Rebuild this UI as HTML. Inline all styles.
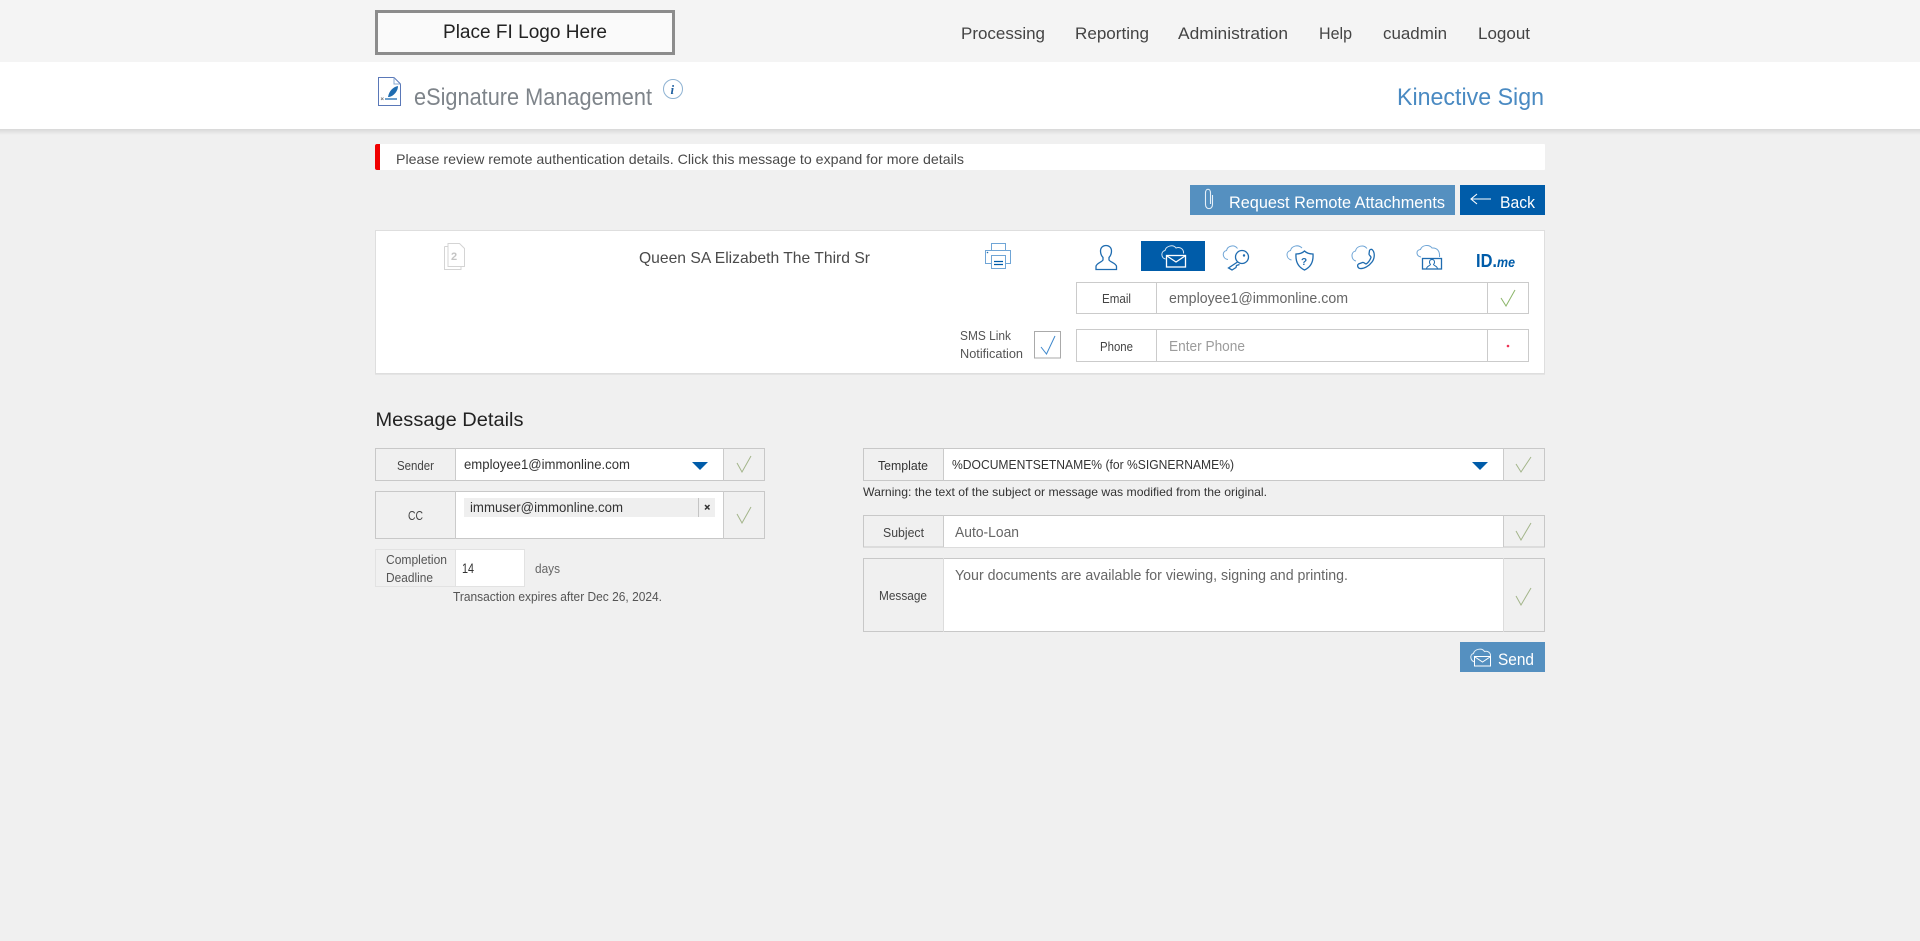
<!DOCTYPE html>
<html lang="en">
<head>
<meta charset="utf-8">
<title>eSignature Management</title>
<style>
html,body{margin:0;padding:0;width:1920px;height:941px;overflow:hidden;background:#f0f0f0}
svg{display:block;position:absolute;left:0;top:0}
text{font-family:"Liberation Sans",sans-serif;white-space:pre}
.i{fill:none;stroke:#1f6cb0;stroke-width:1.3}
.c{fill:none;stroke:#6fa5d6;stroke-width:1}
.l{fill:none;stroke:#cbcbcb;stroke-width:1}
.n{font-size:16.5px;fill:#444}
.lb{font-size:12.5px;fill:#444}
.v{font-size:14.5px;fill:#666}
.ck{fill:none;stroke:#a3b58a;stroke-width:1}
</style>
</head>
<body>
<svg width="1920" height="941" viewBox="0 0 1920 941" xmlns="http://www.w3.org/2000/svg">
<defs>
<linearGradient id="sh" x1="0" y1="0" x2="0" y2="1"><stop offset="0" stop-color="#d8d8d8"/><stop offset="1" stop-color="#f0f0f0"/></linearGradient>
</defs>
<rect width="1920" height="941" fill="#f0f0f0"/>

<!-- top bar -->
<rect width="1920" height="62" fill="#f4f4f4"/>
<rect x="376.500" y="11.500" width="297" height="42" fill="#fafafa" stroke="#8c8c8c" stroke-width="3"/>
<text x="443" y="38" font-size="19" fill="#222" textLength="164" lengthAdjust="spacingAndGlyphs">Place FI Logo Here</text>
<text class="n" x="961" y="39" textLength="84" lengthAdjust="spacingAndGlyphs">Processing</text>
<text class="n" x="1075" y="39" textLength="74" lengthAdjust="spacingAndGlyphs">Reporting</text>
<text class="n" x="1178" y="39" textLength="110" lengthAdjust="spacingAndGlyphs">Administration</text>
<text class="n" x="1319" y="39" textLength="33" lengthAdjust="spacingAndGlyphs">Help</text>
<text class="n" x="1383" y="39" textLength="64" lengthAdjust="spacingAndGlyphs">cuadmin</text>
<text class="n" x="1478" y="39" textLength="52" lengthAdjust="spacingAndGlyphs">Logout</text>

<!-- title band -->
<rect y="129" width="1920" height="6" fill="url(#sh)"/>
<rect y="62" width="1920" height="67" fill="#fff"/>
<path d="M378.500 77.500H394L400.500 84V105.500H378.500Z" fill="none" stroke="#5a78b8" stroke-width="1"/>
<path d="M394 77.500V84H400.500" fill="none" stroke="#8aa8d0" stroke-width="1"/>
<path d="M388 97C389 91 393 87 398 86C398 91 394 96 389 97Z" fill="#1f6cb0"/>
<path d="M385 99H397" stroke="#1f6cb0" stroke-width="1.300"/>
<path d="M381 97.500L383.500 100M383.500 97.500L381 100" stroke="#777" stroke-width=".8"/>
<text x="414" y="105" font-size="24" fill="#7e848a" textLength="238" lengthAdjust="spacingAndGlyphs">eSignature Management</text>
<circle cx="673" cy="89" r="9.500" fill="none" stroke="#8eb2d2" stroke-width="1"/>
<text x="670.500" y="94" font-size="13" font-weight="bold" font-style="italic" fill="#1f5f9f" style="font-family:'Liberation Serif',serif">i</text>
<text x="1397" y="105" font-size="24" fill="#4a8ac2" textLength="147" lengthAdjust="spacingAndGlyphs">Kinective Sign</text>

<!-- alert -->
<rect x="375" y="144" width="1170" height="26" rx="1" fill="#fff"/>
<path d="M377 144H380V170H377Q375 170 375 168V146Q375 144 377 144Z" fill="#f00000"/>
<text x="396" y="164" font-size="14" fill="#4a4a4a" textLength="568" lengthAdjust="spacingAndGlyphs">Please review remote authentication details. Click this message to expand for more details</text>

<!-- action buttons -->
<rect x="1190" y="185" width="265" height="30" fill="#5590c0"/>
<path d="M1212.500 195V204.500C1212.500 210 1205.500 210 1205.500 204.500V193C1205.500 188 1210.500 188 1210.500 193V204" fill="none" stroke="#e6f0f8" stroke-width="1.100"/>
<text x="1229" y="208" font-size="17" fill="#fff" textLength="216" lengthAdjust="spacingAndGlyphs">Request Remote Attachments</text>
<rect x="1460" y="185" width="85" height="30" fill="#005ca9"/>
<path d="M1491 199H1471M1477 194L1471 199L1477 204" fill="none" stroke="#fff" stroke-width="1.100"/>
<text x="1500" y="208" font-size="17" fill="#fff" textLength="35" lengthAdjust="spacingAndGlyphs">Back</text>

<!-- signer card -->
<rect x="375.500" y="230.500" width="1169" height="143" fill="#fff" stroke="#dedede"/>
<path d="M375 374.500H1545" stroke="#e4e4e4"/>
<path d="M444.500 246.500H448M448 243.500H459.500L464.500 248.500V266.500H448Z" fill="#fff" stroke="#d4d4d4"/>
<path d="M444.500 246.500V269.500H461V266.500" fill="none" stroke="#d4d4d4"/>
<text x="451" y="260" font-size="11" font-weight="bold" fill="#c4c4c4">2</text>
<text x="639" y="263" font-size="16" fill="#4a4a4a" textLength="231" lengthAdjust="spacingAndGlyphs">Queen SA Elizabeth The Third Sr</text>

<path d="M991.500 250.500V243.500H1005.500V250.500" fill="none" stroke="#6fa5d6"/>
<path d="M991 263.500H985.500V250.500H1010.500V263.500H1005" fill="none" stroke="#6fa5d6"/>
<rect x="991.500" y="255.500" width="14" height="13" fill="#fff" stroke="#6fa5d6"/>
<path d="M994 261.500H1003M994 264.500H1003" stroke="#005ca9" stroke-width="1.200"/>
<circle cx="987.500" cy="252.500" r=".8" fill="#1f6cb0"/>

<!-- auth tabs -->
<path class="i" d="M1096 269.500H1116.500V266.500C1116.500 263.500 1110 262 1109 260V257.500C1111 255.500 1111.500 253 1111.500 251C1111.500 247.500 1109 245.500 1106 245.500C1103 245.500 1100.500 247.500 1100.500 251C1100.500 253 1101 255.500 1103 257.500V260C1102 262 1096 263.500 1096 266.500Z"/>

<rect x="1141" y="241" width="64" height="30" fill="#005ca9"/>
<path d="M1165.500 259C1161 258 1160.500 251.500 1165 250.500C1166 246 1173 244 1176 248C1180 246.500 1184 249 1183.500 253.500" fill="none" stroke="#d8e6f2" stroke-width="1"/>
<rect x="1166.500" y="255.500" width="19" height="11.500" fill="#005ca9" stroke="#fff" stroke-width="1.300"/>
<path d="M1167 256L1176 262L1185 256" fill="none" stroke="#fff" stroke-width="1.300"/>

<path class="c" d="M1228 259.500C1222.500 259 1221.500 251.500 1226.500 250.500C1227.500 246 1234 244 1237.500 248.500"/>
<circle class="i" cx="1242" cy="257" r="6.500"/>
<circle cx="1244" cy="255.500" r="1.200" fill="#1f6cb0"/>
<path class="i" d="M1237.500 262L1228.500 268L1232 270L1236 267.500L1236.500 265.500L1239.500 264.500"/>

<path class="c" d="M1291.500 260C1286 259 1285.500 251.500 1290.500 250.500C1291.500 246 1298 244 1302 248"/>
<path class="i" d="M1304.500 251C1307 253.500 1310 254 1313 254C1313.500 261 1311 267 1304.500 270C1298 267 1295.500 261 1296 254C1299 254 1302 253.500 1304.500 251Z"/>
<text x="1301" y="265" font-size="10" font-weight="bold" fill="#1f6cb0">?</text>

<path class="c" d="M1356 261C1351 260 1350.500 252 1355.500 251C1356.500 246 1363.500 244 1367 248.500"/>
<path class="i" d="M1372 249.500C1375 252 1375 258 1372 262C1369 266 1364 269 1360 268.500C1357.500 268 1357 265 1358.500 264L1362.500 262.500C1364 262 1365 264 1366 264C1368 263 1370 260 1371 257.500C1371 256 1369 255.500 1369 254L1369.500 250.500C1370 249.500 1371 249 1372 249.500Z"/>

<path class="c" d="M1421 257C1416 256 1415.500 250 1420.500 249.500C1422 245 1429 244 1432 248C1437 247.500 1440 251 1439.500 257"/>
<rect x="1422.500" y="258.500" width="19" height="10.500" fill="#fff" stroke="#1f6cb0" stroke-width="1.300"/>
<path d="M1426.500 269C1426.500 266 1430 266 1430.500 264.500C1429 263 1429 259.500 1432 259.500C1435 259.500 1435 263 1433.500 264.500C1434 266 1437.500 266 1437.500 269" fill="none" stroke="#1f6cb0" stroke-width="1"/>

<text x="1476" y="267" font-size="18" font-weight="bold" fill="#005ca9" textLength="21" lengthAdjust="spacingAndGlyphs">ID.</text>
<text x="1497" y="267" font-size="14" font-weight="bold" font-style="italic" fill="#005ca9" textLength="18" lengthAdjust="spacingAndGlyphs">me</text>

<!-- email + phone -->
<rect class="l" x="1076.500" y="282.500" width="452" height="31"/>
<path class="l" d="M1156.500 282V314M1487.500 282V314"/>
<text class="lb" x="1102" y="303" textLength="29" lengthAdjust="spacingAndGlyphs">Email</text>
<text class="v" x="1169" y="303" textLength="179" lengthAdjust="spacingAndGlyphs">employee1@immonline.com</text>
<path d="M1501 298L1506 306L1515 290" fill="none" stroke="#8cb66a" stroke-width="1"/>
<rect class="l" x="1076.500" y="329.500" width="452" height="32"/>
<path class="l" d="M1156.500 329V362M1487.500 329V362"/>
<text class="lb" x="1100" y="351" textLength="33" lengthAdjust="spacingAndGlyphs">Phone</text>
<text class="v" x="1169" y="351" textLength="76" lengthAdjust="spacingAndGlyphs" style="fill:#9c9c9c">Enter Phone</text>
<circle cx="1508" cy="346" r="1.300" fill="#ee3355"/>

<text class="lb" x="960" y="340" textLength="51" lengthAdjust="spacingAndGlyphs" style="fill:#555">SMS Link</text>
<text class="lb" x="960" y="358" textLength="63" lengthAdjust="spacingAndGlyphs" style="fill:#555">Notification</text>
<rect x="1034.500" y="331.500" width="26" height="26.500" fill="#fff" stroke="#aaa"/>
<path d="M1041 347L1046.500 354L1055 336" fill="none" stroke="#3f88cc" stroke-width="1"/>

<!-- Message Details -->
<text x="375.500" y="426" font-size="19" fill="#222" textLength="148" lengthAdjust="spacingAndGlyphs">Message Details</text>

<rect x="375.500" y="448.500" width="389" height="32" fill="#f0f0f0" stroke="#c8c8c8"/>
<rect x="455" y="449" width="268" height="31" fill="#fff"/>
<path class="l" d="M455.500 448V481M723.500 448V481"/>
<text class="lb" x="397" y="470" textLength="37" lengthAdjust="spacingAndGlyphs">Sender</text>
<text x="464" y="469" font-size="14" fill="#333" textLength="166" lengthAdjust="spacingAndGlyphs">employee1@immonline.com</text>
<path d="M692 462H708L700 470Z" fill="#005ca9"/>
<path class="ck" d="M737 463L742 472L751 456"/>

<rect x="375.500" y="491.500" width="389" height="47" fill="#f0f0f0" stroke="#c8c8c8"/>
<rect x="455" y="492" width="268" height="46" fill="#fff"/>
<path class="l" d="M455.500 491V539M723.500 491V539"/>
<text class="lb" x="408" y="520" textLength="15" lengthAdjust="spacingAndGlyphs">CC</text>
<rect x="464" y="498" width="251" height="19" fill="#efefef"/>
<path d="M698.500 498V517" stroke="#c4c4c4"/>
<text x="470" y="512" font-size="14" fill="#333" textLength="153" lengthAdjust="spacingAndGlyphs">immuser@immonline.com</text>
<path d="M705 505L709.500 509.500M709.500 505L705 509.500" stroke="#333" stroke-width="1.500"/>
<path class="ck" d="M737 514L742 523L751 507"/>

<rect x="375.500" y="549.500" width="149" height="37" fill="#f0f0f0" stroke="#e2e2e2"/>
<rect x="455" y="550" width="69" height="36" fill="#fff"/>
<path d="M455.500 549V587" stroke="#e2e2e2"/>
<text class="lb" x="386" y="564" textLength="61" lengthAdjust="spacingAndGlyphs" style="fill:#555">Completion</text>
<text class="lb" x="386" y="582" textLength="47" lengthAdjust="spacingAndGlyphs" style="fill:#555">Deadline</text>
<text x="462" y="573" font-size="14" fill="#333" textLength="12" lengthAdjust="spacingAndGlyphs">14</text>
<text x="535" y="573" font-size="13" fill="#666" textLength="25" lengthAdjust="spacingAndGlyphs">days</text>
<text x="453" y="601" font-size="12.500" fill="#555" textLength="209" lengthAdjust="spacingAndGlyphs">Transaction expires after Dec 26, 2024.</text>

<!-- right column -->
<rect x="863.500" y="448.500" width="681" height="32" fill="#f0f0f0" stroke="#c8c8c8"/>
<rect x="943" y="449" width="560" height="31" fill="#fff"/>
<path class="l" d="M943.500 448V481M1503.500 448V481"/>
<text class="lb" x="878" y="470" textLength="50" lengthAdjust="spacingAndGlyphs" style="fill:#333">Template</text>
<text x="952" y="469" font-size="13" fill="#333" textLength="282" lengthAdjust="spacingAndGlyphs">%DOCUMENTSETNAME% (for %SIGNERNAME%)</text>
<path d="M1472 462H1488L1480 470Z" fill="#005ca9"/>
<path class="ck" d="M1516 464L1521 472L1531 457"/>
<text x="863" y="496" font-size="12" fill="#333" textLength="404" lengthAdjust="spacingAndGlyphs">Warning: the text of the subject or message was modified from the original.</text>

<rect x="863.500" y="515.500" width="681" height="31.500" fill="#f0f0f0" stroke="#c8c8c8"/>
<rect x="944" y="516" width="559" height="31" fill="#fff"/>
<path class="l" d="M943.500 515V547M1503.500 515V547"/>
<text class="lb" x="883" y="537" textLength="41" lengthAdjust="spacingAndGlyphs">Subject</text>
<text class="v" x="955" y="537" textLength="64" lengthAdjust="spacingAndGlyphs">Auto-Loan</text>
<path class="ck" d="M1516 531L1521 540L1531 523"/>

<rect x="863.500" y="558.500" width="681" height="73" fill="#f0f0f0" stroke="#c8c8c8"/>
<rect x="944" y="559" width="559" height="72" fill="#fff"/>
<path class="l" d="M943.500 558V632M1503.500 558V632" style="stroke:#dcdcdc"/>
<text class="lb" x="879" y="600" textLength="48" lengthAdjust="spacingAndGlyphs">Message</text>
<text class="v" x="955" y="580" textLength="393" lengthAdjust="spacingAndGlyphs">Your documents are available for viewing, signing and printing.</text>
<path class="ck" d="M1516 596L1521 605L1531 588"/>

<rect x="1460" y="642" width="85" height="30" fill="#5590c0"/>
<path d="M1475 662C1470 661 1469.500 654.500 1473.500 653.500C1474.500 649 1482 647.500 1484.500 651.500C1488 650.500 1491 653 1490.500 656.500" fill="none" stroke="#e6f0f8" stroke-width="1"/>
<rect x="1474.500" y="656.500" width="16" height="9.500" fill="#5590c0" stroke="#fff" stroke-width="1"/>
<path d="M1475 657L1482.500 662L1490 657" fill="none" stroke="#fff" stroke-width="1"/>
<text x="1498" y="665" font-size="17" fill="#fff" textLength="36" lengthAdjust="spacingAndGlyphs">Send</text>
</svg>
</body>
</html>
